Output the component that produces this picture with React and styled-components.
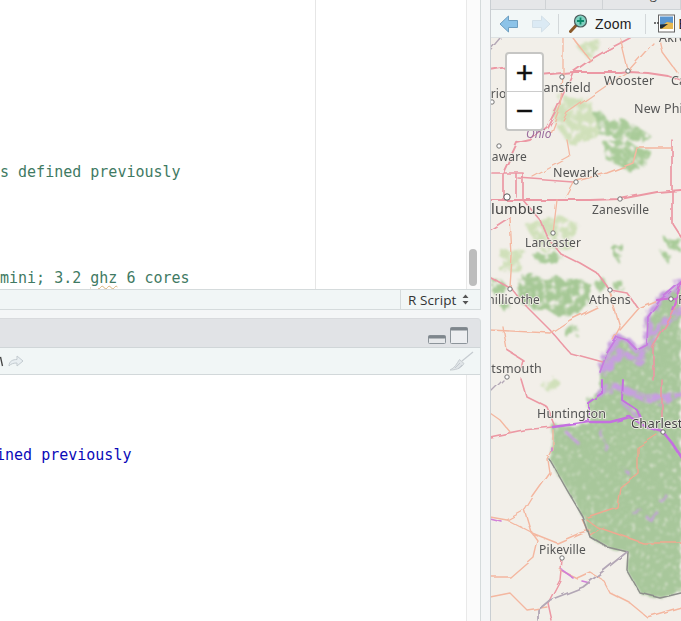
import React from 'react';
import styled, { createGlobalStyle } from 'styled-components';

const GlobalStyle = createGlobalStyle`
  html, body {
    margin: 0;
    padding: 0;
    height: 621px;
    overflow: hidden;
    background: #f4f6f7;
  }
`;

const Page = styled.div`
  display: flex;
  width: 681px;
  height: 621px;
  font-family: "Open Sans", "Liberation Sans", sans-serif;
`;

const LeftColumn = styled.div`
  display: flex;
  flex-direction: column;
  width: 481px;
  flex: none;
  margin-right: 9px;
`;

const SourcePane = styled.div`
  display: flex;
  flex-direction: column;
  height: 310px;
  flex: none;
`;

const PaneBody = styled.div`
  display: flex;
  flex: 1;
  min-height: 0;
  background: #fff;
  border-right: 1px solid #d5dbdc;
`;

const Editor = styled.div`
  width: 316px;
  flex: none;
  border-right: 1px solid #e6e6e6;
  padding-top: ${p => p.$top}px;
  box-sizing: border-box;
  overflow: hidden;
`;

const EditorRest = styled.div`
  flex: 1;
`;

const ConsoleText = styled.div`
  flex: 1;
  padding-top: ${p => p.$top}px;
  overflow: hidden;
`;

const CodeLine = styled.div`
  font-family: "DejaVu Sans Mono", "Liberation Mono", monospace;
  font-size: 15px;
  line-height: 21.2px;
  height: 21.2px;
  white-space: pre;
  color: ${p => p.$color};
  margin-left: ${p => p.$indent || 0}px;
`;

const Squiggle = styled.span`
  text-decoration: underline wavy #d9b27a 1px;
  text-underline-offset: 2px;
`;

const ScrollTrack = styled.div`
  width: 14px;
  flex: none;
  box-sizing: border-box;
  background: #fbfbfb;
  border-left: 1px solid #e9e9e9;
  padding: ${p => p.$top}px 2px 0 2px;
`;

const ScrollThumb = styled.div`
  width: 8px;
  height: 37px;
  border-radius: 4px;
  background: #bdbdbd;
`;

const StatusBar = styled.div`
  display: flex;
  justify-content: flex-end;
  height: 21px;
  flex: none;
  box-sizing: border-box;
  background: #f1f6f6;
  border: 1px solid #d5dbdc;
  border-left: 0;
`;

const ModeBox = styled.div`
  display: flex;
  align-items: center;
  gap: 5px;
  width: 80px;
  box-sizing: border-box;
  padding-left: 7px;
  border-left: 1px solid #d5dbdc;
  font-size: 13.5px;
  letter-spacing: 0.1px;
  color: #333;
`;

const ConsolePane = styled.div`
  display: flex;
  flex-direction: column;
  flex: 1;
  min-height: 0;
  margin-top: 8px;
`;

const ConsoleHeader = styled.div`
  display: flex;
  align-items: flex-end;
  justify-content: flex-end;
  gap: 4px;
  height: 30px;
  flex: none;
  box-sizing: border-box;
  padding: 0 12px 3px 0;
  background: #e1e3e6;
  border-top: 1px solid #d8dadd;
  border-right: 1px solid #d5dbdc;
  border-bottom: 1px solid #d0d6d8;
  border-top-right-radius: 4px;
`;

const ConsoleToolbar = styled.div`
  display: flex;
  align-items: center;
  justify-content: space-between;
  height: 27px;
  flex: none;
  box-sizing: border-box;
  padding: 0 6px 0 0;
  background: #f1f6f6;
  border-right: 1px solid #d5dbdc;
  border-bottom: 1px solid #d2d8da;
`;

const RightColumn = styled.div`
  display: flex;
  flex-direction: column;
  flex: 1;
  min-width: 0;
  border-left: 1px solid #c9ced2;
`;

const TabStrip = styled.div`
  display: flex;
  height: 10px;
  flex: none;
  box-sizing: border-box;
  background: #e5e6e8;
  border-bottom: 1px solid #ced3d6;
  overflow: hidden;
`;

const Tab = styled.div`
  width: ${p => p.$width}px;
  flex: none;
  box-sizing: border-box;
  border-right: 1px solid #cfd2d5;
  padding-left: ${p => p.$pad}px;
  font-size: 12.5px;
  line-height: 14px;
  color: #444;
  white-space: nowrap;
  margin-top: -12px;
  height: 24px;
`;

const ViewerToolbar = styled.div`
  display: flex;
  align-items: center;
  height: 28px;
  flex: none;
  box-sizing: border-box;
  background: #f2f7f7;
  border-bottom: 1px solid #dde2e3;
  padding-left: 8px;
  overflow: hidden;
`;

const ToolIcon = styled.svg`
  flex: none;
  display: block;
  margin-right: ${p => p.$after || 0}px;
`;

const ToolSep = styled.div`
  width: 1px;
  height: 20px;
  flex: none;
  background: #d3d8da;
  margin: 0 ${p => p.$right}px 0 ${p => p.$left}px;
`;

const ToolLabel = styled.span`
  font-family: "Liberation Sans", sans-serif;
  font-size: 14px;
  color: #222;
  letter-spacing: 0.2px;
  white-space: nowrap;
`;

const MapPane = styled.div`
  position: relative;
  flex: 1;
  min-height: 0;
  background: #f2efe9;
  overflow: hidden;
`;

const MapDrawing = styled.svg`
  display: block;
  width: 190px;
  height: 583px;
`;

const ZoomControl = styled.div`
  position: absolute;
  left: 14px;
  top: 14px;
  width: 39px;
  height: 79px;
  box-sizing: border-box;
  border: 2px solid #c6c6c4;
  border-radius: 4px;
  background: #fff;
  display: flex;
  flex-direction: column;
`;

const ZoomButton = styled.div`
  flex: 1;
  display: flex;
  align-items: center;
  justify-content: center;
  font-family: "Liberation Sans", sans-serif;
  font-size: 30px;
  font-weight: 400;
  -webkit-text-stroke: 0.5px #111;
  line-height: 1;
  color: #111;
  & + & {
    border-top: 1px solid #ccc;
  }
`;

const mainForest = 'M600 370L607 353L617 337L627 340L637 350L647 345L648 317L660 300L681 282L681 593L660 598L640 593L627 570L628 552L607 547L590 537L583 517L567 490L550 460L553 427L590 422L588 400L600 393Z';

const patches = [
  { c: '#a6c896', d: 'M517 282L530 272L545 280L556 275L566 282L577 280L590 283L590 300L578 312L560 318L548 310L535 310L520 302Z' },
  { c: '#a9cb99', d: 'M590 118L600 110L609 122L621 118L640 128L650 135L640 141L615 138L598 135Z' },
  { c: '#a9cb99', d: 'M604 142L625 138L638 148L650 150L647 168L630 172L618 165L606 160Z' },
  { c: '#a6c896', d: 'M613 244L620 242L622 255L617 262L613 254Z' },
  { c: '#a9cb99', d: 'M564 330L578 325L576 334L566 337Z' },
  { c: '#a9cb99', d: 'M594 285L605 279L608 288L600 293ZM611 281L622 281L624 288L615 290Z' },
  { c: '#a9cb99', d: 'M664 240L681 238L681 252L668 248ZM660 250L672 256L666 262ZM566 132L578 126L584 134L572 138Z' },
  { c: '#a9cb99', d: 'M533 255L555 252L563 258L548 264L536 262ZM492 280L503 280L505 290L492 296ZM497 300L510 302L505 313Z' },
  { c: '#d0e0ba', d: 'M525 225L560 215L580 225L570 250L540 250ZM500 250L525 250L520 270L500 272Z' },
  { c: '#d0e0ba', d: 'M560 95L590 100L600 135L570 145L552 120ZM575 45L600 40L590 60ZM540 385L555 378L562 384L548 392Z' }
];

// pale purple fringe along the west virginia border, and specks inside it
const fringes = [
  { w: 7, d: 'M600 372L607 353L617 337L627 340L637 350L647 345L648 317L660 300L681 282' },
  { w: 7, d: 'M604 372L620 352L640 362L655 330L681 310' },
  { w: 7, d: 'M600 395L612 385L630 392L650 400L681 395' },
  { w: 3, d: 'M566 432L580 445M600 430L606 450M625 470L628 472M660 500L666 496M632 512L640 510M650 520L656 512M622 402L640 420' }
];

const roads = [
  // trunk roads
  { c: '#ec98a4', w: 1.8, p: '490,70 507,67 540,75 573,72 620,72 628,71 647,72 667,75 681,80' },
  { c: '#ec98a4', w: 1.8, p: '630,38 607,50 590,60 573,72 556,110 547,127 530,140 517,143 503,173' },
  { c: '#ec98a4', w: 1.8, p: '490,200 523,200 590,200 620,199 657,192 681,190' },
  { c: '#ec98a4', w: 1.7, p: '672,140 672,223 681,237' },
  { c: '#ec98a4', w: 1.7, p: '523,200 540,220 547,237 560,253 580,263 597,273 610,290 627,293 637,307' },
  { c: '#ec98a4', w: 1.7, p: '492,173 523,173 523,200 492,200 M503,173 503,200 M516,173 516,197 M518,178 573,182' },
  { c: '#ec98a4', w: 1.7, p: '490,437 523,430 553,427' },
  { c: '#ec98a4', w: 1.6, p: '522,380 527,397 547,407 555,427' },
  { c: '#ec98a4', w: 1.6, p: '681,283 673,313 653,347 653,380 M662,380 662,417' },
  { c: '#ec98a4', w: 1.5, p: '562,560 560,580 548,603 552,621' },
  { c: '#ec98a4', w: 1.5, p: '510,287 527,307 550,330 570,353 603,362' },
  { c: '#ec98a4', w: 1.5, p: '490,277 510,288' },
  { c: '#ec98a4', w: 1.5, p: '507,350 523,360 520,373 M490,230 510,217' },
  // secondary roads
  { c: '#f4b7a0', w: 1.5, p: '573,182 607,173 633,163 637,148 672,148' },
  { c: '#f4b7a0', w: 1.4, p: '510,217 512,257 510,287' },
  { c: '#f4b7a0', w: 1.4, p: '490,330 550,333 570,320 597,307' },
  { c: '#f4b7a0', w: 1.4, p: '503,327 507,350' },
  { c: '#f4b7a0', w: 1.4, p: '610,293 620,327 613,340 M620,330 640,307 657,300' },
  { c: '#f4b7a0', w: 1.3, p: '557,200 553,233 M573,182 565,197 M567,140 570,157 533,177' },
  { c: '#f4b7a0', w: 1.3, p: '563,37 563,77 560,107 550,133 M573,38 590,60 M620,37 628,70' },
  { c: '#f4b7a0', w: 1.3, p: '628,71 590,97 567,113 563,120 M628,71 653,43 M660,40 663,53 677,72' },
  { c: '#f4b7a0', w: 1.4, p: '553,430 553,450 548,460 550,473 533,497 525,510 532,533 537,540 533,557 510,577 490,577' },
  { c: '#f4b7a0', w: 1.4, p: '490,517 507,520 525,510 M507,520 532,533 557,543 580,533 590,530' },
  { c: '#f4b7a0', w: 1.4, p: '560,570 577,578 590,572 603,580 610,593 630,603 647,617 681,607' },
  { c: '#f4b7a0', w: 1.3, p: '490,597 510,593 527,610 547,607 M490,413 500,420 510,432' },
  { c: '#f0a890', w: 1.4, p: '638,447 638,473 620,487 617,507 587,517 M638,447 657,435' },
  { c: '#f0a890', w: 1.4, p: '587,520 597,527 620,535 643,543 681,543 M583,520 590,535 603,527' },
  // rivers and the state line
  { c: '#c46fe0', w: 2.6, p: '553,427 590,422 610,422 630,417 647,427 663,432 672,443 681,457' },
  { c: '#c46fe0', w: 2, p: '623,380 622,400 637,410 640,417 M602,380 602,393 588,403 588,420' },
  { c: '#c77ce0', w: 1.8, p: '600,372 607,353 617,337 627,340 637,350 647,345 648,317 660,300 681,282' },
  { c: '#d06fd8', w: 2.2, p: '657,300 681,297 M681,283 672,310' },
  { c: '#d080d8', w: 1.6, p: '490,519 502,522 M562,570 572,577 M582,581 590,583 M552,448 552,452' },
  { c: '#8e8f8c', w: 1.5, p: '550,460 567,490 583,517 590,537 607,547 628,552 627,570 640,593 660,598 681,593' },
  { c: '#b3a7b6', w: 1.8, p: '627,552 583,587 550,600 538,610 538,621' },
  { c: '#b3a7b6', w: 1.4, p: '490,50 500,38 M490,393 503,380' }
];

const towns = [
  [562, 77], [628, 71], [492, 102], [499, 146], [576, 182], [620, 199],
  [553, 233], [510, 289], [610, 290], [507, 377], [663, 432], [562, 558], [671, 299]
];

const labels = [
  { t: 'Akron', x: 659, y: 42, s: 12.5 },
  { t: 'Mansfield', x: 532, y: 92, s: 12.5 },
  { t: 'Wooster', x: 604, y: 85, s: 12.5 },
  { t: 'Canton', x: 671, y: 85, s: 12.5 },
  { t: 'New Phila', x: 634, y: 113, s: 12.5 },
  { t: 'Marion', x: 514, y: 98, s: 12, a: 'end' },
  { t: 'Delaware', x: 527, y: 161, s: 12, a: 'end' },
  { t: 'Newark', x: 553, y: 177, s: 12.5 },
  { t: 'Columbus', x: 543, y: 214, s: 14.5, a: 'end', c: '#444' },
  { t: 'Zanesville', x: 592, y: 214, s: 12 },
  { t: 'Lancaster', x: 525, y: 247, s: 12 },
  { t: 'Chillicothe', x: 540, y: 304, s: 12, a: 'end' },
  { t: 'Athens', x: 589, y: 304, s: 12.5 },
  { t: 'Parkersburg', x: 678, y: 304, s: 12.5 },
  { t: 'Portsmouth', x: 542, y: 373, s: 12.5, a: 'end' },
  { t: 'Huntington', x: 537, y: 418, s: 12.5 },
  { t: 'Charleston', x: 631, y: 428, s: 13, c: '#444' },
  { t: 'Pikeville', x: 539, y: 554, s: 12 }
];

const RoadMap = () => (
  <MapDrawing viewBox="491 38 190 583">
    <defs>
      <filter id="canopy" x="-5%" y="-5%" width="110%" height="110%" colorInterpolationFilters="sRGB">
        <feTurbulence type="fractalNoise" baseFrequency="0.1" numOctaves="3" seed="4" result="n" />
        <feDisplacementMap in="SourceGraphic" in2="n" scale="8" result="d" />
        <feTurbulence type="fractalNoise" baseFrequency="0.22" numOctaves="2" seed="9" result="m" />
        <feColorMatrix in="m" type="matrix" values="0 0 0 0 0  0 0 0 0 0  0 0 0 0 0  2.5 0 0 0 -0.05" result="mask" />
        <feComposite in="d" in2="mask" operator="in" />
        <feGaussianBlur stdDeviation="1" />
      </filter>
      <filter id="patchy" x="-5%" y="-5%" width="110%" height="110%" colorInterpolationFilters="sRGB">
        <feTurbulence type="fractalNoise" baseFrequency="0.12" numOctaves="3" seed="7" result="n" />
        <feDisplacementMap in="SourceGraphic" in2="n" scale="9" result="d" />
        <feTurbulence type="fractalNoise" baseFrequency="0.14" numOctaves="2" seed="3" result="m" />
        <feColorMatrix in="m" type="matrix" values="0 0 0 0 0  0 0 0 0 0  0 0 0 0 0  4 0 0 0 -1" result="mask" />
        <feComposite in="d" in2="mask" operator="in" />
        <feGaussianBlur stdDeviation="0.9" />
      </filter>
      <filter id="wobble" x="-5%" y="-5%" width="110%" height="110%">
        <feTurbulence type="fractalNoise" baseFrequency="0.06" numOctaves="2" seed="2" result="n" />
        <feDisplacementMap in="SourceGraphic" in2="n" scale="5" />
        <feGaussianBlur stdDeviation="0.4" />
      </filter>
      <filter id="soft">
        <feGaussianBlur stdDeviation="0.35" />
      </filter>
    </defs>
    <path d={mainForest} fill="#a8c79b" filter="url(#canopy)" />
    <g filter="url(#patchy)">
      {patches.map((f, i) => <path key={i} d={f.d} fill={f.c} />)}
    </g>
    <g filter="url(#patchy)" fill="none" stroke="#c79ee0" strokeLinecap="round">
      {fringes.map((f, i) => <path key={i} d={f.d} strokeWidth={f.w} />)}
    </g>
    <g filter="url(#wobble)" fill="none" strokeLinejoin="round" strokeLinecap="round">
      {roads.map((r, i) => (
        <path key={i} d={`M${r.p.replace(/ M/g, 'M').replace(/ /g, 'L')}`} stroke={r.c} strokeWidth={r.w} />
      ))}
    </g>
    <g filter="url(#soft)">
      {towns.map(([x, y], i) => (
        <circle key={i} cx={x} cy={y} r="2.2" fill="#fff" stroke="#666" strokeWidth="0.9" />
      ))}
      <circle cx="507" cy="197" r="3.2" fill="#fff" stroke="#555" strokeWidth="1" />
    </g>
    <g fontFamily='"Noto Sans", "DejaVu Sans", sans-serif' filter="url(#soft)">
      {labels.map(l => (
        <text
          key={l.t}
          x={l.x}
          y={l.y}
          fontSize={l.s}
          textAnchor={l.a || 'start'}
          fill={l.c || '#555'}
          stroke="#f2efe9"
          strokeWidth="1.6"
          paintOrder="stroke"
          letterSpacing="0.15"
        >
          {l.t}
        </text>
      ))}
      <text x="526" y="138" fontSize="12" fontStyle="italic" fill="#9a6d9e">Ohio</text>
    </g>
  </MapDrawing>
);

const NavArrow = ({ flip, light }) => (
  <ToolIcon width="20" height="18" viewBox="0 0 20 18" $after={flip ? 0 : 12}>
    <g transform={flip ? 'translate(20 0) scale(-1 1)' : undefined}>
      <path
        d="M1 9L9.5 1V5.5H18.5V12.5H9.5V17Z"
        fill={light ? '#dbeaf4' : '#8cc3e8'}
        stroke={light ? '#d3e0e8' : '#6d9ec0'}
        strokeLinejoin="round"
      />
    </g>
  </ToolIcon>
);

const ZoomIcon = () => (
  <ToolIcon width="19" height="19" viewBox="0 0 19 19" $after={7}>
    <path d="M1.5 17.5L7 11.5" stroke="#8a5a2a" strokeWidth="3" strokeLinecap="round" />
    <circle cx="11.5" cy="7" r="6" fill="#7fd0c0" stroke="#4a5a5a" strokeWidth="1.2" />
    <path d="M11.5 3.5V10.5M8 7H15" stroke="#0a8a6a" strokeWidth="1.8" />
  </ToolIcon>
);

const ExportIcon = () => (
  <ToolIcon width="21" height="19" viewBox="0 0 21 19" $after={4}>
    <rect x="4.5" y="1" width="16" height="17" fill="#fff" stroke="#666" />
    <rect x="6" y="2.5" width="13" height="9" fill="#5a96d0" />
    <path d="M6 13L13 8L19 9V15H6Z" fill="#e6b850" />
    <path d="M6 10.5L14 10L8 14.5H6Z" fill="#1e2c3a" />
    <path d="M0 9H5" stroke="#444" strokeWidth="1.4" strokeDasharray="2 1" />
  </ToolIcon>
);

const SortArrows = () => (
  <svg width="7" height="11" viewBox="0 0 7 11">
    <path d="M3.5 0.5L6.5 4H0.5ZM3.5 10.5L0.5 7H6.5Z" fill="#555" />
  </svg>
);

const MinimizeIcon = () => (
  <svg width="18" height="9" viewBox="0 0 18 9">
    <rect x="0.5" y="0.5" width="17" height="8" rx="1" fill="#e6e8ea" stroke="#8c949a" />
    <rect x="0.5" y="0.5" width="17" height="3" rx="1" fill="#7e868c" />
  </svg>
);

const MaximizeIcon = () => (
  <svg width="18" height="17" viewBox="0 0 18 17">
    <rect x="0.5" y="0.5" width="17" height="16" rx="1" fill="#eceef0" stroke="#8c949a" />
    <rect x="0.5" y="0.5" width="17" height="3" rx="1" fill="#7e868c" />
  </svg>
);

const RedoIcon = () => (
  <svg width="24" height="14" viewBox="0 0 24 14">
    <path d="M0.5 3L2.5 12" stroke="#444" strokeWidth="1.3" />
    <path
      d="M9 12C9 7 13 5.5 17 5.5V2L23 7L17 12V9C14 9 11 9.5 9 12Z"
      fill="#e8eef1"
      stroke="#c3cbd0"
      strokeLinejoin="round"
    />
  </svg>
);

const BroomIcon = () => (
  <svg width="25" height="20" viewBox="0 0 25 20">
    <path d="M24 1L13 10" stroke="#c5cbd0" strokeWidth="1.2" />
    <path d="M10.5 8.5L15 12.5C13 16 9 19 1 19C6 17 8 12 10.5 8.5Z" fill="#dfe4e7" stroke="#c8ced2" />
    <path d="M6 17L11 12M9 18L13 14" stroke="#c3cad0" />
  </svg>
);

const App = () => (
  <Page>
    <GlobalStyle />
    <LeftColumn>
      <SourcePane>
        <PaneBody>
          <Editor $top={162}>
            <CodeLine $color="#3f7a63">s defined previously</CodeLine>
            <CodeLine $color="#3f7a63"> </CodeLine>
            <CodeLine $color="#3f7a63"> </CodeLine>
            <CodeLine $color="#3f7a63"> </CodeLine>
            <CodeLine $color="#3f7a63"> </CodeLine>
            <CodeLine $color="#3f7a63">mini; 3.2 <Squiggle>ghz</Squiggle> 6 cores</CodeLine>
          </Editor>
          <EditorRest />
          <ScrollTrack $top={249}>
            <ScrollThumb />
          </ScrollTrack>
        </PaneBody>
        <StatusBar>
          <ModeBox>
            R Script
            <SortArrows />
          </ModeBox>
        </StatusBar>
      </SourcePane>
      <ConsolePane>
        <ConsoleHeader>
          <MinimizeIcon />
          <MaximizeIcon />
        </ConsoleHeader>
        <ConsoleToolbar>
          <RedoIcon />
          <BroomIcon />
        </ConsoleToolbar>
        <PaneBody>
          <ConsoleText $top={70}>
            <CodeLine $color="#0a0ab8" $indent={-4}>ined previously</CodeLine>
          </ConsoleText>
          <ScrollTrack $top={0} />
        </PaneBody>
      </ConsolePane>
    </LeftColumn>
    <RightColumn>
      <TabStrip>
        <Tab $width={55} $pad={22}>Files</Tab>
        <Tab $width={57} $pad={13}>Plots</Tab>
        <Tab $width={78} $pad={13}>Packages</Tab>
      </TabStrip>
      <ViewerToolbar>
        <NavArrow />
        <NavArrow flip light />
        <ToolSep $left={7} $right={10} />
        <ZoomIcon />
        <ToolLabel>Zoom</ToolLabel>
        <ToolSep $left={13} $right={8} />
        <ExportIcon />
        <ToolLabel>Export</ToolLabel>
      </ViewerToolbar>
      <MapPane>
        <RoadMap />
        <ZoomControl>
          <ZoomButton>+</ZoomButton>
          <ZoomButton>−</ZoomButton>
        </ZoomControl>
      </MapPane>
    </RightColumn>
  </Page>
);

export default App;
